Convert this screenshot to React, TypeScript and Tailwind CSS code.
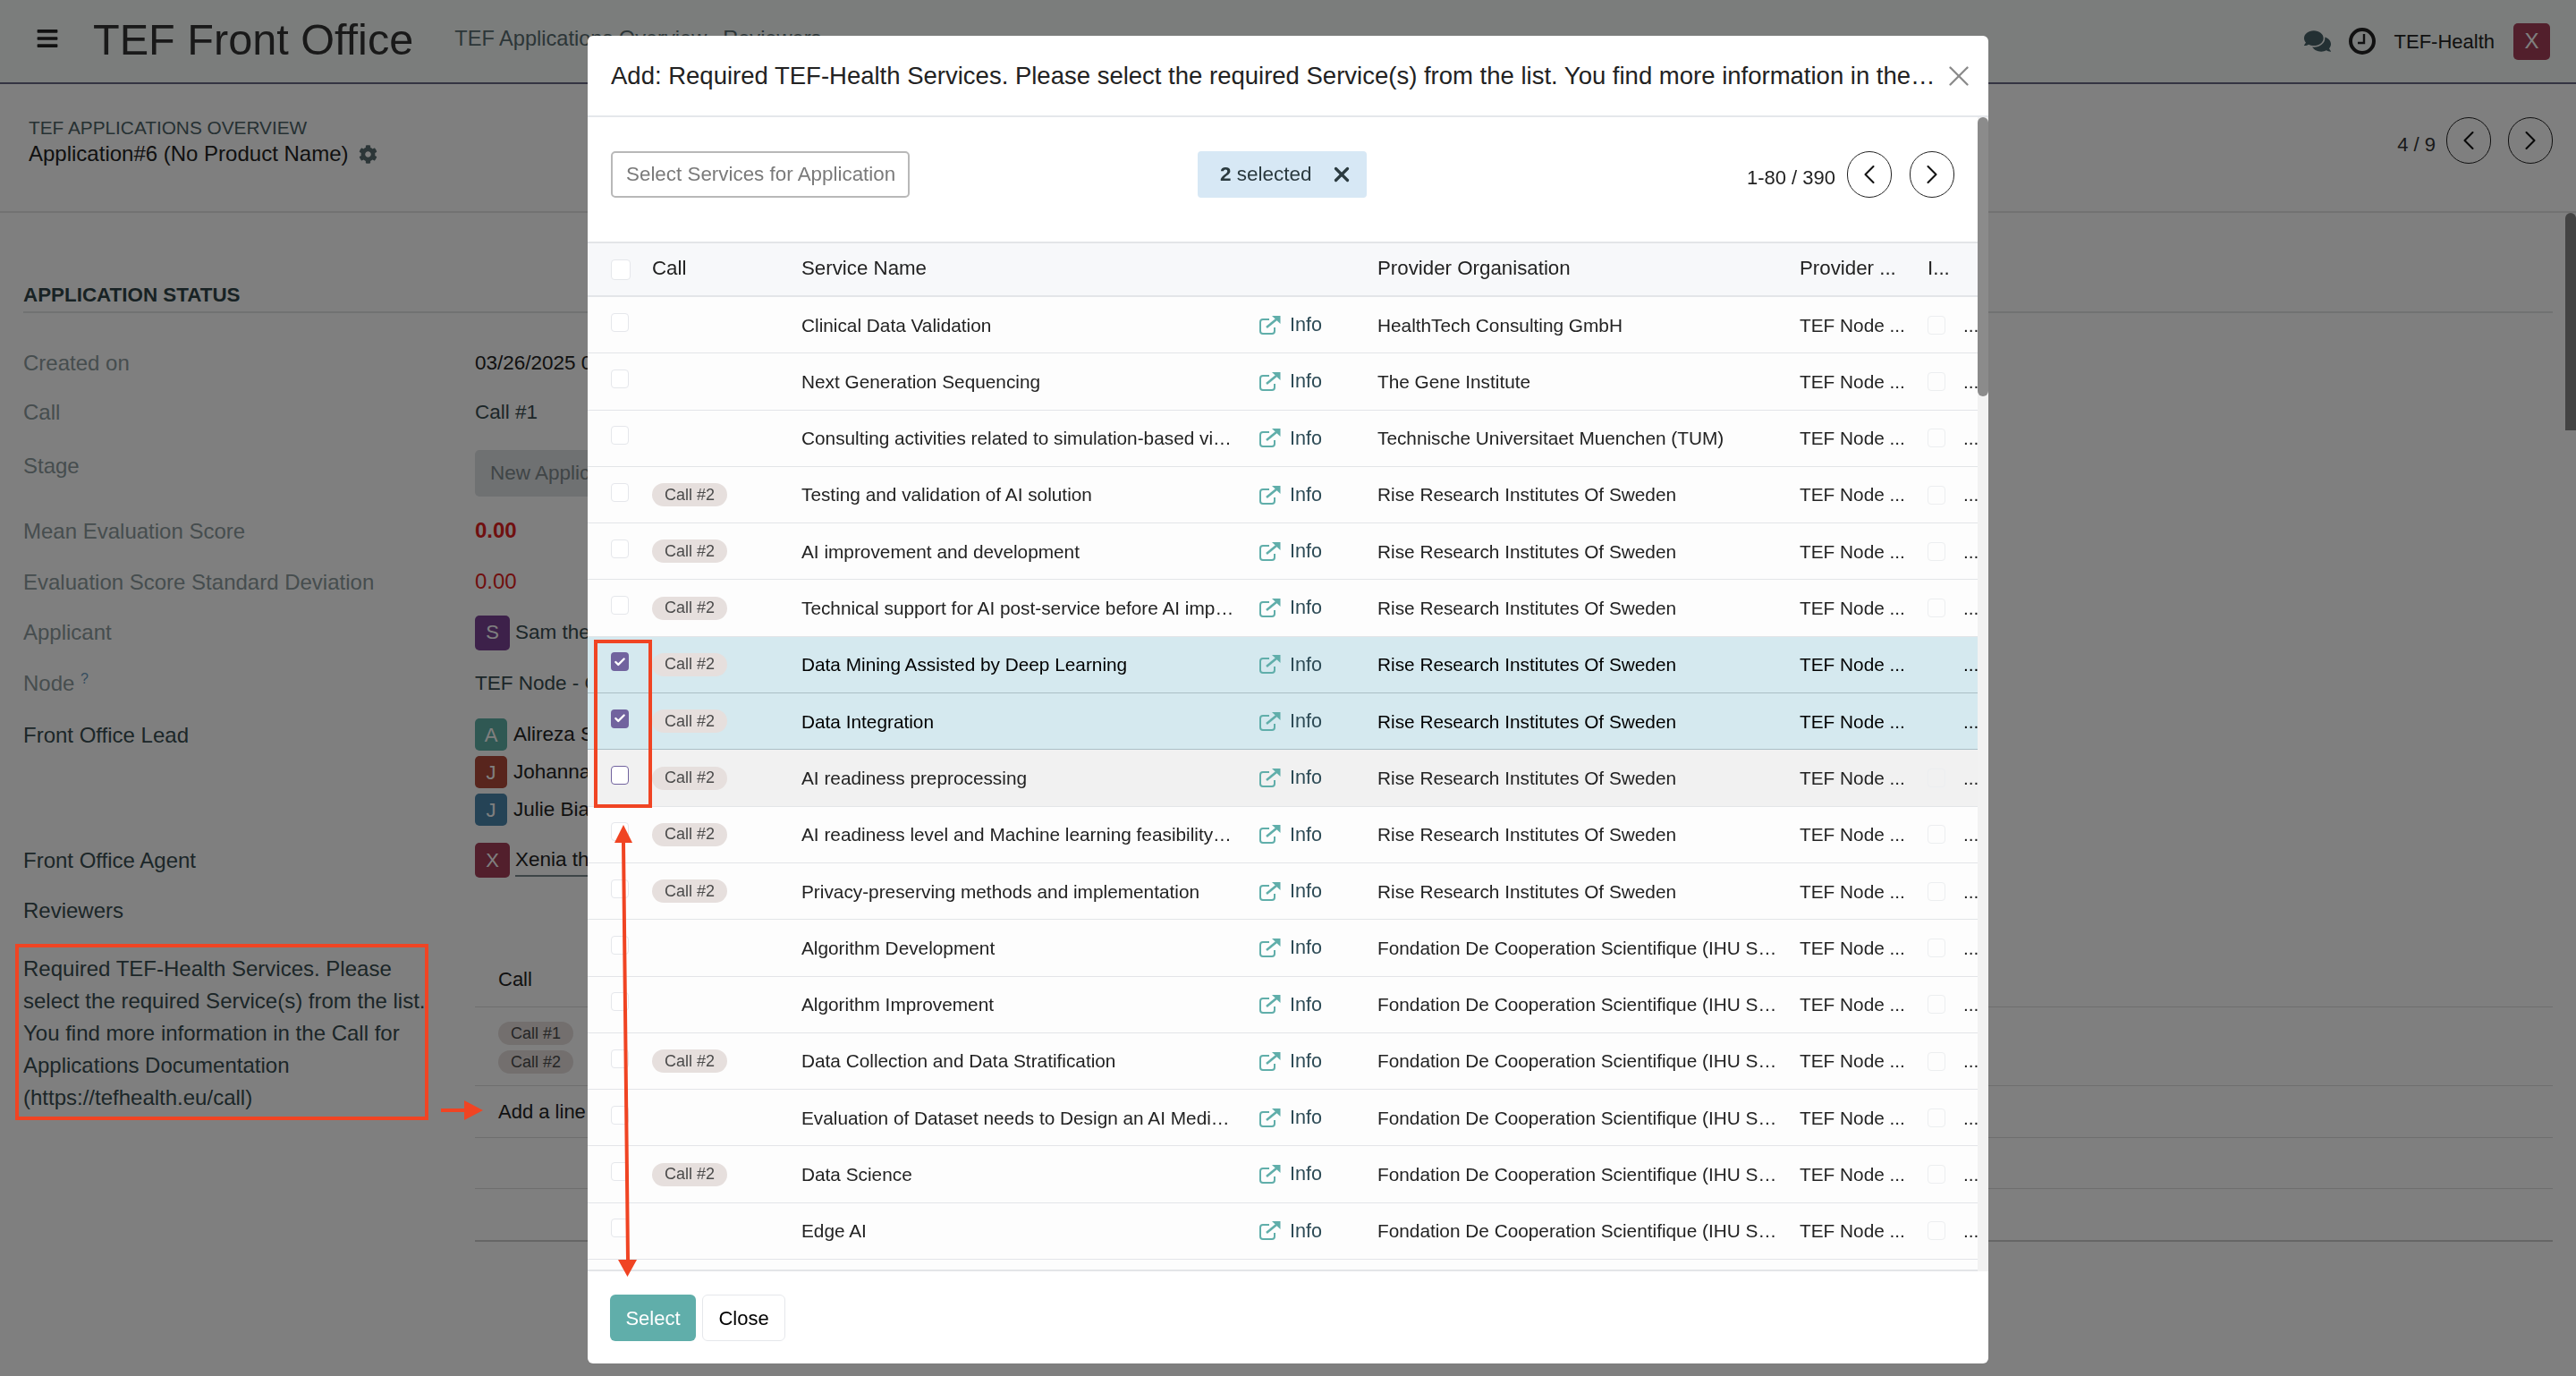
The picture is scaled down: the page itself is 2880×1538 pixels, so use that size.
import React from 'react'
import { Check, ChevronLeft, ChevronRight, X } from 'lucide-react'
import { FaBars, FaCog, FaComments } from 'react-icons/fa'

type Service = {
  name: string
  org: string
  call?: boolean
  state?: 'selected' | 'hover'
}

const RISE = 'Rise Research Institutes Of Sweden'
const IHU = 'Fondation De Cooperation Scientifique (IHU Strasbourg)'

const services: Service[] = [
  { name: 'Clinical Data Validation', org: 'HealthTech Consulting GmbH' },
  { name: 'Next Generation Sequencing', org: 'The Gene Institute' },
  { name: 'Consulting activities related to simulation-based virtual trials', org: 'Technische Universitaet Muenchen (TUM)' },
  { name: 'Testing and validation of AI solution', org: RISE, call: true },
  { name: 'AI improvement and development', org: RISE, call: true },
  { name: 'Technical support for AI post-service before AI implementation', org: RISE, call: true },
  { name: 'Data Mining Assisted by Deep Learning', org: RISE, call: true, state: 'selected' },
  { name: 'Data Integration', org: RISE, call: true, state: 'selected' },
  { name: 'AI readiness preprocessing', org: RISE, call: true, state: 'hover' },
  { name: 'AI readiness level and Machine learning feasibility study', org: RISE, call: true },
  { name: 'Privacy-preserving methods and implementation', org: RISE, call: true },
  { name: 'Algorithm Development', org: IHU },
  { name: 'Algorithm Improvement', org: IHU },
  { name: 'Data Collection and Data Stratification', org: IHU, call: true },
  { name: 'Evaluation of Dataset needs to Design an AI Medical Device', org: IHU },
  { name: 'Data Science', org: IHU, call: true },
  { name: 'Edge AI', org: IHU },
]

const GRID = 'grid grid-cols-[72px_167px_512px_132px_472px_143px_40px_16px] items-center'

const PagerButton = ({ dir }: { dir: 'left' | 'right' }) => (
  <button className="flex h-[52px] w-[50px] items-center justify-center rounded-full border border-[#222] text-[#111]">
    {dir === 'left' ? <ChevronLeft size={36} strokeWidth={1.4} /> : <ChevronRight size={36} strokeWidth={1.4} />}
  </button>
)

const CallBadge = ({ label, className }: { label: string; className?: string }) => (
  <span className={`flex h-[26px] w-[84px] items-center justify-center rounded-full bg-[#e6dfdd] text-[18px] text-[#4b4b4b] ${className ?? ''}`}>
    {label}
  </span>
)

const Avatar = ({ letter, color, size }: { letter: string; color: string; size: string }) => (
  <span className={`flex shrink-0 items-center justify-center rounded-[5px] text-[22px] text-white ${color} ${size}`}>
    {letter}
  </span>
)

const InfoIcon = () => (
  <svg viewBox="0 0 24 21" className="mr-[10px] h-[21px] w-[24px] text-[#60aeaa]" fill="none" stroke="currentColor" strokeWidth="2">
    <path d="M11 4H4a3 3 0 0 0-3 3v10a3 3 0 0 0 3 3h10a3 3 0 0 0 3-3v-4" />
    <path d="M8 13 19 4" strokeWidth="2.6" />
    <path d="M14 0h9.5v9z" fill="currentColor" stroke="none" />
  </svg>
)

const Row = ({ s }: { s: Service }) => {
  const selected = s.state === 'selected'
  const hover = s.state === 'hover'
  return (
    <div
      className={`${GRID} h-[63.3px] border-b text-[20.8px] ${
        selected
          ? 'border-[#abbfc6] bg-[#d5e9ef] text-black'
          : hover
            ? 'border-[#e3e5e8] bg-[#f1f1f1] text-[#222]'
            : 'border-[#e3e5e8] bg-[#fdfdfd] text-[#222]'
      }`}
    >
      <div className="pb-[6px] pl-[26px]">
        {selected ? (
          <span className="flex h-[21px] w-[20px] items-center justify-center rounded-[4px] bg-[#71639e] text-white">
            <Check size={14} strokeWidth={4} />
          </span>
        ) : (
          <span className={`block h-[21px] w-[20px] rounded-[4px] border bg-white ${hover ? 'border-[#71639e]' : 'border-[#e5e7eb]'}`} />
        )}
      </div>
      <div>{s.call && <CallBadge label="Call #2" />}</div>
      <div className="truncate pr-[27px]">{s.name}</div>
      <div className="flex items-center text-[21.6px] text-[#2c4a55]">
        <InfoIcon />
        Info
      </div>
      <div className="truncate pr-[24px]">{s.org}</div>
      <div className="whitespace-nowrap">TEF Node ...</div>
      <div>
        <span className={`block h-[21px] w-[20px] rounded-[4px] border border-[#eceef0] ${selected ? 'opacity-0' : ''}`} />
      </div>
      <div className="overflow-hidden whitespace-nowrap">...</div>
    </div>
  )
}

const FormRow = ({ label, h, dark, children }: { label: string; h: string; dark?: boolean; children: React.ReactNode }) => (
  <div className={`grid grid-cols-[505px_1fr] items-center text-[24px] leading-[26px] ${h}`}>
    <div className={dark ? 'text-[#384c50]' : 'text-[#8c9a9d]'}>{label}</div>
    <div className="whitespace-nowrap text-[22.5px] text-[#384c50]">{children}</div>
  </div>
)

const ApplicationPage = () => (
  <div className="h-[1538px] overflow-hidden bg-white font-['Liberation_Sans',sans-serif]">
    {/* top nav */}
    <header className="flex h-[94px] items-center border-b-2 border-[#686884] bg-[#f6faf8] pl-[40px] pr-[29px]">
      <FaBars className="mb-[6px] h-[26px] w-[26px] text-[#222]" />
      <h1 className="mb-[4px] ml-[38px] text-[48.6px] text-[#333]">TEF Front Office</h1>
      <nav className="mb-[4px] ml-[46px] flex gap-[18px] text-[23.6px] text-[#596c70]">
        <span>TEF Applications Overview</span>
        <span>Reviewers</span>
      </nav>
      <div className="ml-auto flex items-center">
        <FaComments className="h-[30px] w-[30px] text-[#466066]" />
        <svg viewBox="0 0 30 30" className="ml-[20px] h-[30px] w-[30px] text-[#222]" fill="none" stroke="currentColor">
          <circle cx="15" cy="15" r="13" strokeWidth="4" />
          <path d="M17 7v10h-7" strokeWidth="2.4" />
        </svg>
        <span className="ml-[21px] text-[22px] text-[#222]">TEF-Health</span>
        <span className="ml-[21px] flex h-[41px] w-[41px] items-center justify-center rounded-[5px] bg-[#a43f58] text-[24px] text-white">X</span>
      </div>
    </header>

    {/* control panel */}
    <div className="flex h-[144px] items-start justify-between border-b-2 border-[#e4e4e4] pl-[32px] pr-[26px]">
      <div className="pt-[34px]">
        <div className="text-[20.8px] leading-[30px] text-[#4d6266]">TEF APPLICATIONS OVERVIEW</div>
        <div className="flex items-center text-[24px] leading-[28px] text-[#222]">
          Application#6 (No Product Name)
          <FaCog className="ml-[11px] h-[21px] w-[21px] text-[#596c70]" />
        </div>
      </div>
      <div className="flex items-center pt-[37px] text-[22px] text-[#333]">
        <span className="mr-[12px] mt-[8px]">4 / 9</span>
        <PagerButton dir="left" />
        <span className="w-[19px]" />
        <PagerButton dir="right" />
      </div>
    </div>

    {/* sheet */}
    <div className="px-[26px]">
      <h2 className="mt-[78px] border-b-2 border-[#e2e4e4] pb-[4px] text-[22.4px] font-bold leading-[28px] text-[#304548]">APPLICATION STATUS</h2>

      <div className="mt-[33px]">
        <FormRow label="Created on" h="h-[46px]">
          <span className="text-[#222]">03/26/2025 09:41:12</span>
        </FormRow>
        <FormRow label="Call" h="h-[63px]">Call #1</FormRow>
        <FormRow label="Stage" h="h-[58px]">
          <div className="-my-[10px] flex h-[52px] w-[300px] translate-y-[8px] items-center rounded-[5px] bg-[#dfe2e4] pl-[17px] text-[#7f8a8e]">New Application</div>
        </FormRow>
        <FormRow label="Mean Evaluation Score" h="h-[87px]">
          <span className="text-[24px] font-bold text-[#e02020]">0.00</span>
        </FormRow>
        <FormRow label="Evaluation Score Standard Deviation" h="h-[27px]">
          <span className="text-[24px] text-[#e02020]">0.00</span>
        </FormRow>
        <FormRow label="Applicant" h="h-[86px]">
          <div className="flex items-center gap-[6px]">
            <Avatar letter="S" color="bg-[#7a4395]" size="h-[39px] w-[39px]" />
            Sam the Applicant
          </div>
        </FormRow>
        <div className="grid h-[28px] grid-cols-[505px_1fr] items-center text-[24px] leading-[26px]">
          <div className="text-[#8c9a9d]">
            Node <sup className="text-[16px] leading-none text-[#6d9ac0]">?</sup>
          </div>
          <div className="whitespace-nowrap text-[22.5px] text-[#384c50]">TEF Node - Germany</div>
        </div>
        <div className="grid h-[163px] grid-cols-[505px_1fr] items-start text-[24px] text-[#384c50]">
          <div className="pt-[30px] leading-[28px]">Front Office Lead</div>
          <div className="flex flex-col gap-[6px] whitespace-nowrap pt-[25px] text-[22.5px] text-[#222]">
            <div className="flex items-center gap-[7px]">
              <Avatar letter="A" color="bg-[#5fb0a6]" size="h-[36px] w-[36px]" />
              Alireza Smith
            </div>
            <div className="flex items-center gap-[7px]">
              <Avatar letter="J" color="bg-[#b04a3a]" size="h-[36px] w-[36px]" />
              Johanna Meyer
            </div>
            <div className="flex items-center gap-[7px]">
              <Avatar letter="J" color="bg-[#4a86ad]" size="h-[36px] w-[36px]" />
              Julie Bianchi
            </div>
          </div>
        </div>
        <FormRow label="Front Office Agent" h="h-[41px]" dark>
          <div className="flex items-center gap-[6px]">
            <Avatar letter="X" color="bg-[#a43f58]" size="h-[39px] w-[39px]" />
            <span className="w-[300px] border-b-2 border-[#7b8a8e] leading-[34px] text-[#222]">Xenia the Agent</span>
          </div>
        </FormRow>
        <div className="h-[74px] pt-[22px] text-[24px] leading-[28px] text-[#384c50]">Reviewers</div>
      </div>

      <div className="grid grid-cols-[505px_1fr]">
        <p className="w-[460px] pt-[9px] text-[24px] leading-[36px] text-[#384c50]">
          Required TEF-Health Services. Please select the required Service(s) from the list. You find more information in the Call for Applications Documentation (https://tefhealth.eu/call)
        </p>
        <div className="text-[22px] text-[#222]">
          <div className="flex h-[70px] items-end border-b border-[#dcdcdc] pb-[14px] pl-[26px]">Call</div>
          <div className="flex h-[88px] flex-col gap-[6px] border-b border-[#dcdcdc] pl-[26px] pt-[16px]">
            <CallBadge label="Call #1" className="bg-[#d9d2d0]" />
            <CallBadge label="Call #2" className="bg-[#d9d2d0]" />
          </div>
          <div className="flex h-[58px] items-center border-b border-[#dcdcdc] pl-[26px]">Add a line</div>
          <div className="h-[57px] border-b border-[#dcdcdc]" />
          <div className="h-[59px] border-b-2 border-[#cccccc]" />
        </div>
      </div>
    </div>

    {/* page scrollbar */}
    <div className="fixed right-0 top-[238px] h-[243px] w-[12px] rounded-t-full bg-[#868686]" />
  </div>
)

const ServicesModal = () => (
  <div className="fixed left-[657px] top-[40px] flex h-[1484px] w-[1566px] flex-col overflow-hidden rounded-[6px] bg-white font-['Liberation_Sans',sans-serif]">
    <div className="flex h-[91px] shrink-0 items-center border-b-2 border-[#e5e7eb] pl-[26px] pr-[14px]">
      <h3 className="min-w-0 flex-1 truncate pr-[4px] text-[27.5px] text-[#222]">
        Add: Required TEF-Health Services. Please select the required Service(s) from the list. You find more information in the Call for Applications Documentation (https://tefhealth.eu/call)
      </h3>
      <X size={38} strokeWidth={1.5} className="text-[#8a8a8a]" />
    </div>

    <div className="relative min-h-0 flex-1 overflow-hidden">
      {/* toolbar */}
      <div className="flex h-[139px] items-start pl-[26px] pr-[38px] pt-[38px]">
        <div className="flex h-[52px] w-[334px] items-center rounded-[5px] border-2 border-[#b8b8b8] pl-[15px] text-[22.4px] text-[#7a7a7a]">
          Select Services for Application
        </div>
        <div className="ml-[322px] flex h-[52px] w-[189px] items-center justify-between rounded-[4px] bg-[#d7e8f5] pl-[25px] pr-[15px] text-[22.5px] text-[#2b3a3f]">
          <span>
            <b>2</b> selected
          </span>
          <X size={26} strokeWidth={3} />
        </div>
        <div className="ml-auto flex items-center text-[22px] text-[#222]">
          <span className="mr-[13px] mt-[6px]">1-80 / 390</span>
          <PagerButton dir="left" />
          <span className="w-[20px]" />
          <PagerButton dir="right" />
        </div>
      </div>

      {/* list */}
      <div className="w-[1554px]">
        <div className={`${GRID} h-[62px] border-y-2 border-[#e3e5e8] bg-[#f7f8fa] text-[22.3px] text-[#222]`}>
          <div className="pl-[26px]">
            <span className="block h-[23px] w-[22px] rounded-[4px] border border-[#e5e7eb] bg-white" />
          </div>
          <div className="pb-[2px]">Call</div>
          <div className="pb-[2px]">Service Name</div>
          <div />
          <div className="pb-[2px]">Provider Organisation</div>
          <div className="pb-[2px]">Provider ...</div>
          <div className="pb-[2px]">I...</div>
          <div />
        </div>
        {services.map((s) => (
          <Row key={s.name} s={s} />
        ))}
        <div className="h-[13px] border-b-2 border-[#e3e5e8] bg-[#fdfdfd]" />
      </div>

      {/* list scrollbar */}
      <div className="absolute bottom-0 right-0 top-0 w-[12px] bg-[#f2f2f2]">
        <div className="h-[312px] rounded-full bg-[#8b8b8b]" />
      </div>
    </div>

    <div className="flex h-[103px] shrink-0 items-start gap-[7px] pl-[25px] pt-[26px] text-[22px]">
      <button className="h-[52px] w-[96px] rounded-[6px] bg-[#60aeaa] text-white">Select</button>
      <button className="h-[52px] w-[93px] rounded-[6px] border border-[#e5e7eb] bg-white text-black">Close</button>
    </div>
  </div>
)

const Annotations = () => (
  <>
    <div className="fixed left-[17px] top-[1055px] h-[197px] w-[462px] border-[4px] border-[#f04423]" />
    <div className="fixed left-[664px] top-[715px] h-[188px] w-[65px] border-[4px] border-[#f04423]" />
    <svg className="fixed left-[490px] top-[1225px] h-[32px] w-[54px]" viewBox="0 0 54 32" fill="#f04423">
      <path d="M3 14h26V5l21 11-21 11v-9H3z" />
    </svg>
    <svg className="fixed left-[680px] top-[918px] h-[512px] w-[40px]" viewBox="0 0 40 512" fill="#f04423">
      <path d="M17 4 7 24h8l5 466h-9l10.500 19 10.500-19h-8L19 24h8z" />
    </svg>
  </>
)

export default function App() {
  return (
    <div className="relative h-[1538px] overflow-hidden">
      <ApplicationPage />
      <div className="fixed inset-0 bg-black/50" />
      <ServicesModal />
      <Annotations />
    </div>
  )
}
